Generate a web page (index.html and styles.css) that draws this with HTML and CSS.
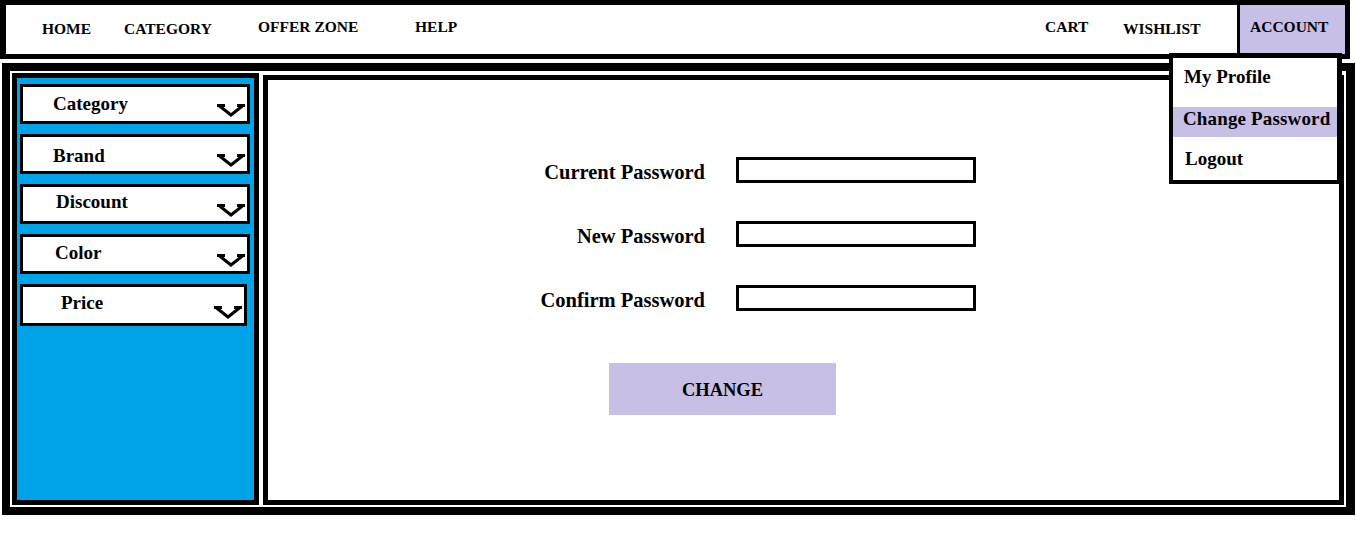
FILE: index.html
```html
<!DOCTYPE html>
<html lang="en">
<head>
<meta charset="utf-8">
<title>Change Password</title>
<link rel="stylesheet" href="styles.css">
</head>
<body>
<header class="topbar">
  <nav class="menu">
    <a class="menu-item">HOME</a>
    <a class="menu-item">CATEGORY</a>
    <a class="menu-item up">OFFER ZONE</a>
    <a class="menu-item up">HELP</a>
    <a class="menu-item up">CART</a>
    <a class="menu-item">WISHLIST</a>
    <a class="menu-item account up">ACCOUNT</a>
  </nav>
</header>

<div class="dropdown">
  <div class="dd-item first">My Profile</div>
  <div class="dd-item active">Change Password</div>
  <div class="dd-item last">Logout</div>
</div>

<main class="frame">
  <aside class="sidebar">
    <div class="filter f-category"><span class="filter-label">Category</span><svg class="chev" viewBox="0 0 30 14" width="30" height="14"><path d="M1 2.5H9M3 2.5L15 12L27 2.5M21 2.5H29"/></svg></div>
    <div class="filter f-brand"><span class="filter-label">Brand</span><svg class="chev" viewBox="0 0 30 14" width="30" height="14"><path d="M1 2.5H9M3 2.5L15 12L27 2.5M21 2.5H29"/></svg></div>
    <div class="filter f-discount"><span class="filter-label">Discount</span><svg class="chev" viewBox="0 0 30 14" width="30" height="14"><path d="M1 2.5H9M3 2.5L15 12L27 2.5M21 2.5H29"/></svg></div>
    <div class="filter f-color"><span class="filter-label">Color</span><svg class="chev" viewBox="0 0 30 14" width="30" height="14"><path d="M1 2.5H9M3 2.5L15 12L27 2.5M21 2.5H29"/></svg></div>
    <div class="filter f-price"><span class="filter-label">Price</span><svg class="chev" viewBox="0 0 30 14" width="30" height="14"><path d="M1 2.5H9M3 2.5L15 12L27 2.5M21 2.5H29"/></svg></div>
  </aside>

  <section class="content">
    <form class="pw-form">
      <div class="pw-grid">
        <label class="pw-label" for="cur">Current Password</label>
        <input class="pw-field" id="cur" type="password">
        <label class="pw-label" for="new">New Password</label>
        <input class="pw-field" id="new" type="password">
        <label class="pw-label" for="conf">Confirm Password</label>
        <input class="pw-field" id="conf" type="password">
      </div>
      <button class="pw-btn" type="button">CHANGE</button>
    </form>
  </section>
</main>
</body>
</html>
```

FILE: styles.css
```css
* { box-sizing: border-box; }

body {
  margin: 0;
  font-family: "Liberation Serif", "Times New Roman", serif;
  font-weight: bold;
  color: #000;
  background: #fff;
}

/* ---------- top navigation ---------- */
.topbar {
  width: 1350px;
  height: 59px;
  border: 5px solid #000;
  border-left-width: 6px;
}

.menu {
  height: 100%;
  display: grid;
  grid-template-columns: 82px 134px 157px 1fr 78px 114px 108px;
  padding-left: 36px;
}

.menu-item {
  font-size: 15.5px;
  line-height: 15px;
  padding-top: 15.5px;
  white-space: nowrap;
  color: #000;
}

.menu-item.up { padding-top: 14px; }

.menu-item.account {
  border-left: 3px solid #000;
  background: #c8bfe7;
  padding-left: 10px;
}

/* ---------- account dropdown ---------- */
.dropdown {
  position: absolute;
  left: 1169px;
  top: 53px;
  width: 173px;
  height: 131px;
  border: 5px solid #000;
  border-left-width: 4px;
  border-bottom-width: 4px;
  background: #fff;
  z-index: 2;
}

.dd-item {
  font-size: 19px;
  line-height: 23px;
  padding-left: 11px;
  white-space: nowrap;
}

.dd-item.first { height: 49px; padding-top: 7px; }
.dd-item.active {
  height: 30px;
  background: #c8bfe7;
  padding-left: 10px;
  letter-spacing: 0.15px;
}
.dd-item.last { padding-top: 10px; padding-left: 12px; }

/* ---------- main frame ---------- */
.frame {
  margin: 4px 0 0 2px;
  width: 1353px;
  height: 452px;
  border: 8px solid #000;
  border-right-width: 9px;
  padding: 2px;
  display: flex;
  gap: 4px;
}

.sidebar {
  width: 247px;
  flex: none;
  border: 5px solid #000;
  background: #00a2e8;
  padding: 6px 0 0 3px;
  display: flex;
  flex-direction: column;
  gap: 10px;
}

.filter {
  width: 230px;
  height: 40px;
  border: 3px solid #000;
  background: #fff;
  display: flex;
  align-items: flex-start;
  padding: 5px 1px 0 30px;
}

.f-brand { padding-left: 30px; padding-top: 7px; }
.f-discount { padding-left: 33px; padding-top: 3px; }
.f-color { padding-left: 32px; padding-top: 4px; }
.f-price { padding-left: 38px; padding-top: 4px; width: 227px; height: 42px; }

.filter-label {
  font-size: 19px;
  line-height: 23px;
}

.chev {
  margin-left: auto;
  align-self: flex-end;
  margin-bottom: 4px;
  flex: none;
}

.chev path {
  fill: none;
  stroke: #000;
  stroke-width: 3;
}

/* ---------- content ---------- */
.content {
  flex: 1;
  margin-top: 2px;
  border: 5px solid #000;
  background: #fff;
  padding: 77px 0 0 257px;
}

.pw-grid {
  display: grid;
  grid-template-columns: 180px 240px;
  grid-auto-rows: 26px;
  column-gap: 31px;
  row-gap: 38px;
  align-items: center;
}

.pw-label {
  font-size: 20.5px;
  line-height: 18px;
  text-align: right;
  white-space: nowrap;
  padding-top: 4px;
}

.pw-field {
  width: 240px;
  height: 26px;
  border: 3px solid #000;
  padding: 0;
  margin: 0;
  background: #fff;
  outline: none;
}

.pw-btn {
  display: block;
  margin: 52px 0 0 84px;
  width: 227px;
  height: 52px;
  border: none;
  background: #c8bfe7;
  font-family: "Liberation Serif", "Times New Roman", serif;
  font-weight: bold;
  font-size: 18.5px;
  color: #000;
  padding: 3px 0 0 0;
}
```
